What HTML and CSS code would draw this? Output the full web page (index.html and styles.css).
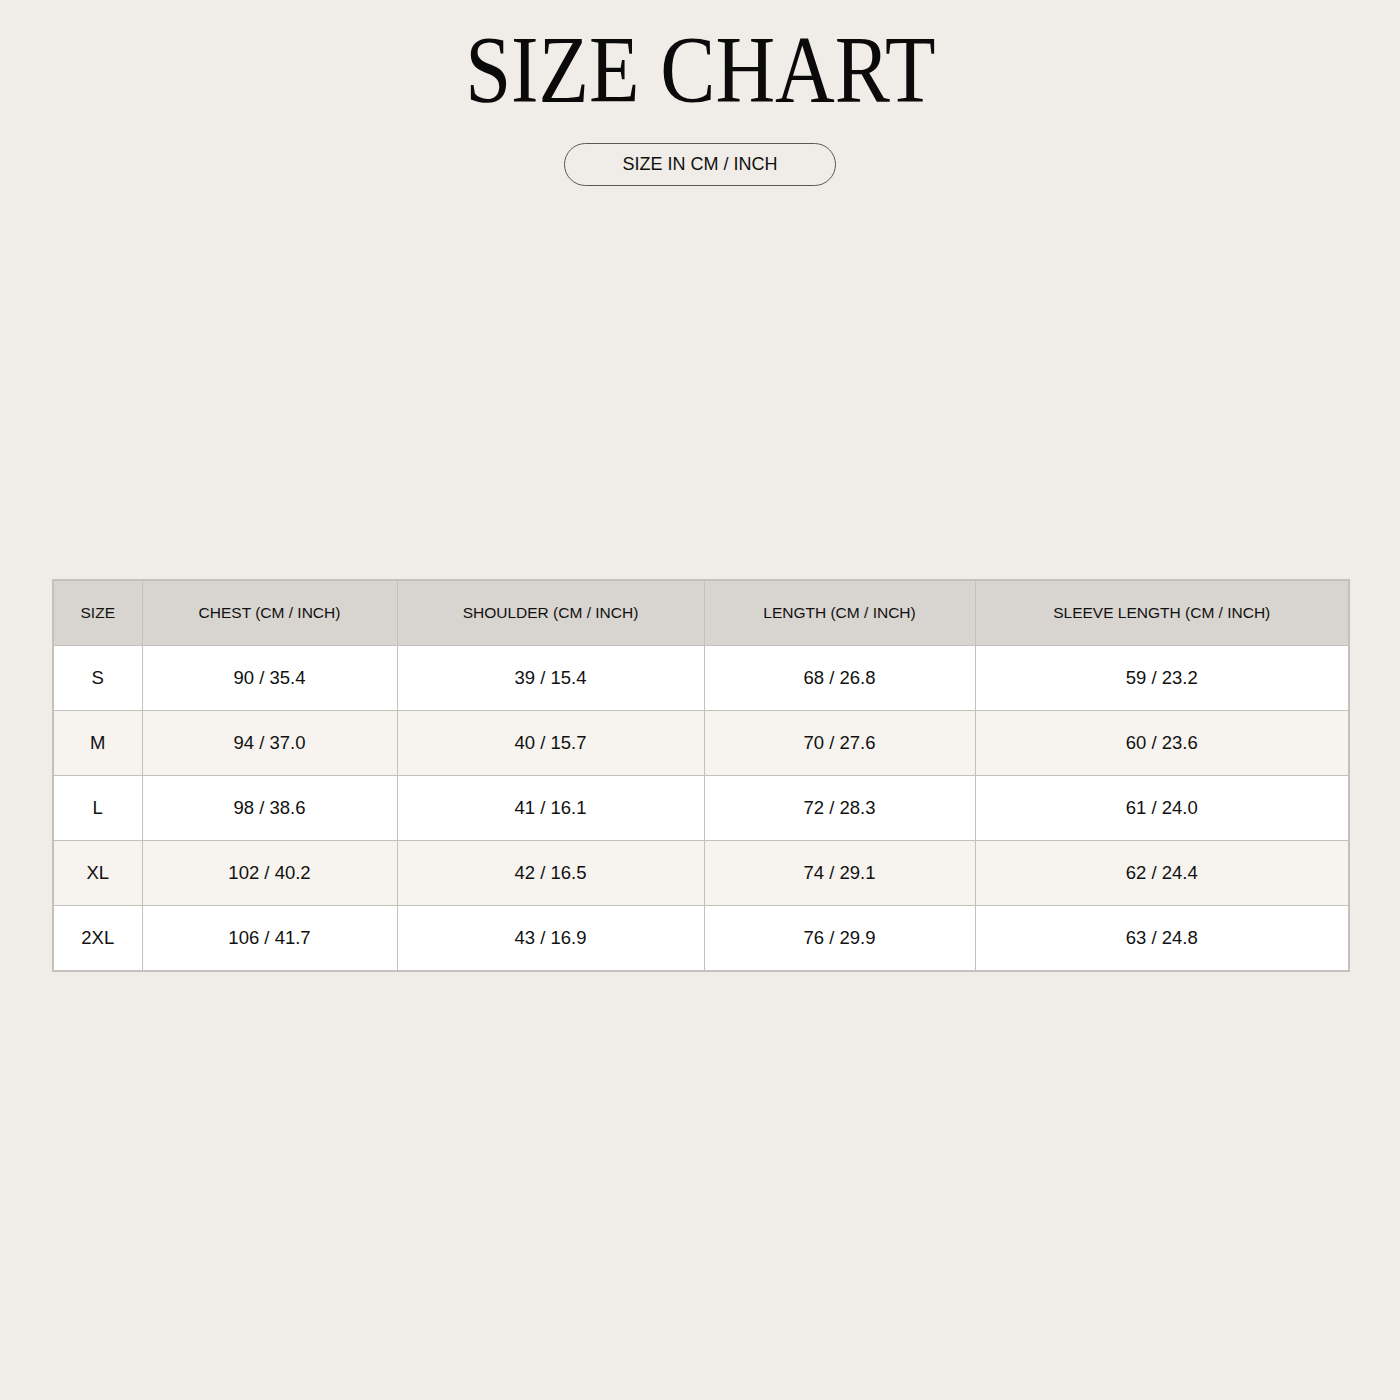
FILE: index.html
```html
<!DOCTYPE html>
<html lang="en">
<head>
<meta charset="utf-8">
<title>Size Chart</title>
<link rel="stylesheet" href="styles.css">
</head>
<body>
<header class="header">
  <h1 class="title"><span class="title-text">SIZE CHART</span></h1>
  <div class="pill">SIZE IN CM / INCH</div>
</header>
<main class="chart">
  <table class="size-table">
    <colgroup>
      <col class="c1"><col class="c2"><col class="c3"><col class="c4"><col class="c5">
    </colgroup>
    <thead>
      <tr>
        <th>SIZE</th>
        <th>CHEST (CM / INCH)</th>
        <th>SHOULDER (CM / INCH)</th>
        <th>LENGTH (CM / INCH)</th>
        <th>SLEEVE LENGTH (CM / INCH)</th>
      </tr>
    </thead>
    <tbody>
      <tr><td>S</td><td>90 / 35.4</td><td>39 / 15.4</td><td>68 / 26.8</td><td>59 / 23.2</td></tr>
      <tr><td>M</td><td>94 / 37.0</td><td>40 / 15.7</td><td>70 / 27.6</td><td>60 / 23.6</td></tr>
      <tr><td>L</td><td>98 / 38.6</td><td>41 / 16.1</td><td>72 / 28.3</td><td>61 / 24.0</td></tr>
      <tr><td>XL</td><td>102 / 40.2</td><td>42 / 16.5</td><td>74 / 29.1</td><td>62 / 24.4</td></tr>
      <tr><td>2XL</td><td>106 / 41.7</td><td>43 / 16.9</td><td>76 / 29.9</td><td>63 / 24.8</td></tr>
    </tbody>
  </table>
</main>
</body>
</html>
```
FILE: styles.css
```css
html, body {
  margin: 0;
  padding: 0;
}
body {
  background: #f0ede8;
  color: #111;
  font-family: "Liberation Sans", Arial, sans-serif;
  min-height: 1400px;
}
.header {
  display: flex;
  flex-direction: column;
  align-items: center;
  padding-top: 22px;
}
.title {
  margin: 0;
  font-family: "Liberation Serif", "Times New Roman", serif;
  font-weight: 400;
  font-size: 95px;
  line-height: 96px;
  color: #0a0a0a;
}
.title-text {
  display: inline-block;
  transform: scaleX(0.87);
}
.pill {
  margin-top: 25px;
  box-sizing: border-box;
  width: 272px;
  height: 43px;
  border: 1px solid #5a5856;
  border-radius: 22px;
  display: flex;
  align-items: center;
  justify-content: center;
  font-size: 18px;
  color: #111;
}
.chart {
  padding: 393px 52px 0 52px;
}
.size-table {
  width: 1296px;
  border-collapse: collapse;
  table-layout: fixed;
  border: 2px solid #c4c1bd;
}
.c1 { width: 89px; }
.c2 { width: 255px; }
.c3 { width: 307px; }
.c4 { width: 271px; }
.c5 { width: 374px; }
.size-table th,
.size-table td {
  border: 1.5px solid #c4c1bd;
  text-align: center;
  height: 64px;
  padding: 0;
}
.size-table th {
  background: #d8d4cf;
  font-weight: 400;
  font-size: 15.5px;
  color: #111;
}
.size-table td {
  font-size: 18.5px;
  color: #111;
  background: #ffffff;
}
.size-table tbody tr:nth-child(even) td {
  background: #f7f4ef;
}
```
